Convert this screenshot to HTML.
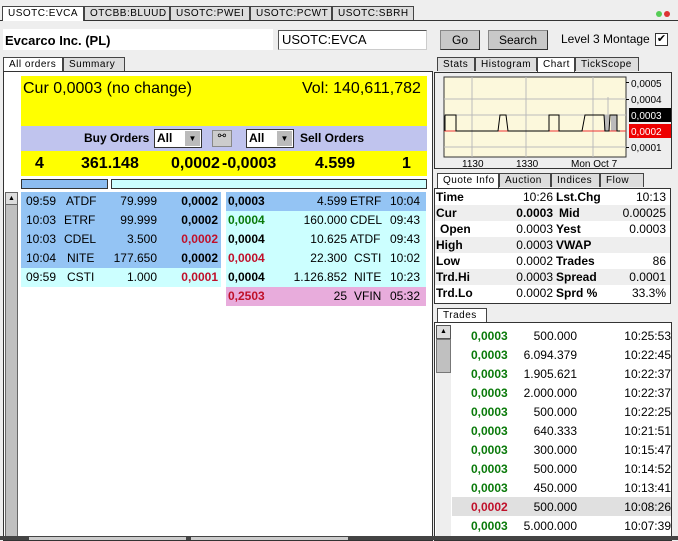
<!DOCTYPE html>
<html><head><style>
*{margin:0;padding:0;box-sizing:border-box}
body{width:678px;height:540px;background:#eeeeee;font-family:"Liberation Sans",sans-serif;position:relative;overflow:hidden;font-size:12px;color:#000}
.a{position:absolute}
.tab{position:absolute;height:14px;border:1px solid #444;border-bottom:none;background:#ddd;font-size:10px;letter-spacing:0.5px;padding:1px 0 0 5px;white-space:nowrap;overflow:hidden;border-top-right-radius:2px 0}
.tab.on{background:#fff}
.b{font-weight:bold}
.r{text-align:right}
.row{position:absolute;height:19px;font-size:12px;line-height:19px}
.row span{position:absolute}
.g{color:#0a7a0a}.red{color:#c0102a}
.btn{position:absolute;background:#c8c8c8;border:1px solid #888;border-right-color:#333;border-bottom-color:#333;text-align:center;font-size:12px;line-height:18px}
</style></head><body>
<div class="a" style="left:0;top:20px;width:678px;border-top:1px solid #333"></div>
<div class="tab on" style="left:2px;top:6px;width:82px;height:15px">USOTC:EVCA</div>
<div class="tab" style="left:84px;top:6px;width:86px">OTCBB:BLUUD</div>
<div class="tab" style="left:170px;top:6px;width:80px">USOTC:PWEI</div>
<div class="tab" style="left:250px;top:6px;width:82px">USOTC:PCWT</div>
<div class="tab" style="left:332px;top:6px;width:82px">USOTC:SBRH</div>
<div class="a" style="left:656px;top:11px;width:6px;height:6px;border-radius:50%;background:#5c5"></div>
<div class="a" style="left:664px;top:11px;width:6px;height:6px;border-radius:50%;background:#d33"></div>
<div class="a" style="left:3px;top:29px;width:270px;height:21px;background:#fff"></div>
<div class="a b" style="left:5px;top:33px;font-size:13px">Evcarco Inc. (PL)</div>
<div class="a" style="left:278px;top:30px;width:149px;height:20px;background:#fff;border:1px solid #555;border-right-color:#ccc;border-bottom-color:#ccc;font-size:13px;padding:1px 3px">USOTC:EVCA</div>
<div class="btn" style="left:440px;top:30px;width:40px;height:20px">Go</div>
<div class="btn" style="left:488px;top:30px;width:60px;height:20px">Search</div>
<div class="a" style="left:561px;top:32px;font-size:12px">Level 3 Montage</div>
<div class="a" style="left:655px;top:33px;width:13px;height:13px;border:1px solid #333;background:#fff;font-size:11px;line-height:11px;text-align:center">✔</div>
<div class="tab on" style="left:3px;top:57px;width:60px;height:15px">All orders</div>
<div class="tab" style="left:63px;top:57px;width:62px">Summary</div>
<div class="a" style="left:3px;top:71px;width:430px;height:470px;border:1px solid #333;background:#fff"></div>
<div class="a" style="left:21px;top:76px;width:406px;height:50px;background:#ffff00"></div>
<div class="a" style="left:23px;top:80px;font-size:16px">Cur 0,0003 (no change)</div>
<div class="a" style="left:302px;top:80px;font-size:16px">Vol: 140,611,782</div>
<div class="a" style="left:21px;top:126px;width:406px;height:25px;background:#c0c4ee"></div>
<div class="a b" style="left:84px;top:131px;font-size:12px">Buy Orders</div>
<div class="a" style="left:154px;top:129px;width:48px;height:19px;background:#fff;border:1px solid #333;font-size:12px;font-weight:bold;padding:1px 2px">All</div>
<div class="a" style="left:185px;top:131px;width:15px;height:15px;background:#bbb;font-size:8px;text-align:center;line-height:15px">▼</div>
<div class="a" style="left:212px;top:130px;width:20px;height:17px;background:#ccc;border:1px solid #888;font-size:10px;text-align:center">⚯</div>
<div class="a" style="left:246px;top:129px;width:48px;height:19px;background:#fff;border:1px solid #333;font-size:12px;font-weight:bold;padding:1px 2px">All</div>
<div class="a" style="left:277px;top:131px;width:15px;height:15px;background:#bbb;font-size:8px;text-align:center;line-height:15px">▼</div>
<div class="a b" style="left:300px;top:131px;font-size:12px">Sell Orders</div>
<div class="a" style="left:21px;top:151px;width:406px;height:25px;background:#ffff00"></div>
<div class="row b" style="left:21px;top:154px;width:406px;font-size:16px">
<span style="left:14px">4</span><span style="left:60px">361.148</span><span style="left:150px">0,0002</span><span style="left:201px">-0,0003</span><span style="left:294px">4.599</span><span style="left:381px">1</span></div>
<div class="a" style="left:21px;top:179px;width:87px;height:10px;background:#8cbcf0;border:1px solid #333"></div>
<div class="a" style="left:111px;top:179px;width:316px;height:10px;background:#ccffff;border:1px solid #333"></div>
<div class="a" style="left:5px;top:192px;width:13px;height:346px;background:#c0c0c0;border:1px solid #666"></div>
<div class="a" style="left:5px;top:192px;width:13px;height:13px;background:#ddd;border:1px solid #666;font-size:7px;text-align:center;line-height:11px">▲</div>
<div class="a" style="left:21px;top:192px;width:200px;height:76px;background:#94c4f4"></div>
<div class="a" style="left:21px;top:268px;width:200px;height:19px;background:#ccffff"></div>
<div class="a" style="left:226px;top:192px;width:200px;height:19px;background:#94c4f4"></div>
<div class="a" style="left:226px;top:211px;width:200px;height:76px;background:#ccffff"></div>
<div class="a" style="left:226px;top:287px;width:200px;height:19px;background:#e8acdc"></div>
<div class="row" style="left:21px;top:192px;width:200px"><span style="left:5px">09:59</span><span style="left:45px">ATDF</span><span class="r" style="right:64px">79.999</span><span class="b" style="right:3px">0,0002</span></div>
<div class="row" style="left:21px;top:211px;width:200px"><span style="left:5px">10:03</span><span style="left:43px">ETRF</span><span class="r" style="right:64px">99.999</span><span class="b" style="right:3px">0,0002</span></div>
<div class="row" style="left:21px;top:230px;width:200px"><span style="left:5px">10:03</span><span style="left:43px">CDEL</span><span class="r" style="right:64px">3.500</span><span class="b red" style="right:3px">0,0002</span></div>
<div class="row" style="left:21px;top:249px;width:200px"><span style="left:5px">10:04</span><span style="left:46px">NITE</span><span class="r" style="right:64px">177.650</span><span class="b" style="right:3px">0,0002</span></div>
<div class="row" style="left:21px;top:268px;width:200px"><span style="left:5px">09:59</span><span style="left:46px">CSTI</span><span class="r" style="right:64px">1.000</span><span class="b red" style="right:3px">0,0001</span></div>
<div class="row" style="left:226px;top:192px;width:200px"><span class="b" style="left:2px">0,0003</span><span style="right:79px">4.599</span><span style="left:124px">ETRF</span><span style="left:164px">10:04</span></div>
<div class="row" style="left:226px;top:211px;width:200px"><span class="b g" style="left:2px">0,0004</span><span style="right:79px">160.000</span><span style="left:124px">CDEL</span><span style="left:164px">09:43</span></div>
<div class="row" style="left:226px;top:230px;width:200px"><span class="b" style="left:2px">0,0004</span><span style="right:79px">10.625</span><span style="left:124px">ATDF</span><span style="left:164px">09:43</span></div>
<div class="row" style="left:226px;top:249px;width:200px"><span class="b red" style="left:2px">0,0004</span><span style="right:79px">22.300</span><span style="left:128px">CSTI</span><span style="left:164px">10:02</span></div>
<div class="row" style="left:226px;top:268px;width:200px"><span class="b" style="left:2px">0,0004</span><span style="right:79px">1.126.852</span><span style="left:128px">NITE</span><span style="left:164px">10:23</span></div>
<div class="row" style="left:226px;top:287px;width:200px"><span class="b red" style="left:2px">0,2503</span><span style="right:79px">25</span><span style="left:128px">VFIN</span><span style="left:164px">05:32</span></div>
<div class="tab" style="left:437px;top:57px;width:38px">Stats</div>
<div class="tab" style="left:475px;top:57px;width:62px">Histogram</div>
<div class="tab on" style="left:537px;top:57px;width:38px;height:15px">Chart</div>
<div class="tab" style="left:575px;top:57px;width:64px">TickScope</div>
<div class="a" style="left:434px;top:72px;width:238px;height:97px;border:1px solid #333;background:#eee"></div>
<svg class="a" style="left:434px;top:72px" width="238" height="97">
<rect x="10" y="5" width="182" height="80" fill="#fcf8dc" stroke="#333"/>
<g stroke="#bbb"><line x1="38" y1="5" x2="38" y2="85"/><line x1="92" y1="5" x2="92" y2="85"/><line x1="159" y1="5" x2="159" y2="85"/>
<line x1="10" y1="27" x2="192" y2="27"/><line x1="10" y1="43" x2="192" y2="43"/><line x1="10" y1="59" x2="192" y2="59"/><line x1="10" y1="75" x2="192" y2="75"/></g>
<rect x="170" y="43" width="5" height="16" fill="#bbb"/><rect x="177" y="43" width="6" height="16" fill="#bbb"/><line x1="174" y1="25" x2="174" y2="43" stroke="#bbb"/>
<line x1="10" y1="59" x2="192" y2="59" stroke="#e33"/>
<polyline fill="none" stroke="#000" points="11,59 11,43 22,43 22,59 64,59 66,43 72,43 74,59 115,59 115,43 125,43 125,59 148,59 151,43 170,43 171,59 175,59 176,43 183,43 183,59 186,59"/>
<g fill="#000"><rect x="192" y="10" width="3" height="1"/><rect x="192" y="27" width="3" height="1"/><rect x="192" y="75" width="3" height="1"/></g>
<rect x="195" y="36" width="42" height="14" fill="#000"/><rect x="195" y="52" width="42" height="14" fill="#e00"/>
<g font-family="Liberation Sans" font-size="10"><text x="197" y="15">0,0005</text><text x="197" y="31">0,0004</text><text x="197" y="47" fill="#fff">0,0003</text><text x="197" y="63" fill="#fff">0,0002</text><text x="197" y="79">0,0001</text>
<text x="28" y="95">1130</text><text x="82" y="95">1330</text><text x="137" y="95">Mon  Oct 7</text></g>
</svg>
<div class="tab on" style="left:437px;top:173px;width:62px;height:15px">Quote Info</div>
<div class="tab" style="left:499px;top:173px;width:52px">Auction</div>
<div class="tab" style="left:551px;top:173px;width:49px">Indices</div>
<div class="tab" style="left:600px;top:173px;width:44px">Flow</div>
<div class="a" style="left:434px;top:188px;width:237px;height:116px;border:1px solid #333;background:#fff"></div>
<div class="a" style="left:435px;top:205px;width:235px;height:16px;background:#eee"></div>
<div class="a" style="left:435px;top:237px;width:235px;height:16px;background:#eee"></div>
<div class="a" style="left:435px;top:269px;width:235px;height:16px;background:#eee"></div>
<div class="row" style="left:436px;top:189px;width:233px;height:16px;line-height:16px"><span class="b" style="left:0">Time</span><span style="right:116px">10:26</span><span class="b" style="left:120px">Lst.Chg</span><span style="right:3px">10:13</span></div>
<div class="row" style="left:436px;top:205px;width:233px;height:16px;line-height:16px"><span class="b" style="left:0">Cur</span><span class="b" style="right:116px">0.0003</span><span class="b" style="left:123px">Mid</span><span style="right:3px">0.00025</span></div>
<div class="row" style="left:436px;top:221px;width:233px;height:16px;line-height:16px"><span class="b" style="left:4px">Open</span><span style="right:116px">0.0003</span><span class="b" style="left:120px">Yest</span><span style="right:3px">0.0003</span></div>
<div class="row" style="left:436px;top:237px;width:233px;height:16px;line-height:16px"><span class="b" style="left:0">High</span><span style="right:116px">0.0003</span><span class="b" style="left:120px">VWAP</span></div>
<div class="row" style="left:436px;top:253px;width:233px;height:16px;line-height:16px"><span class="b" style="left:0">Low</span><span style="right:116px">0.0002</span><span class="b" style="left:120px">Trades</span><span style="right:3px">86</span></div>
<div class="row" style="left:436px;top:269px;width:233px;height:16px;line-height:16px"><span class="b" style="left:0">Trd.Hi</span><span style="right:116px">0.0003</span><span class="b" style="left:120px">Spread</span><span style="right:3px">0.0001</span></div>
<div class="row" style="left:436px;top:285px;width:233px;height:16px;line-height:16px"><span class="b" style="left:0">Trd.Lo</span><span style="right:116px">0.0002</span><span class="b" style="left:120px">Sprd %</span><span style="right:3px">33.3%</span></div>
<div class="tab on" style="left:437px;top:308px;width:50px;height:15px">Trades</div>
<div class="a" style="left:434px;top:322px;width:238px;height:219px;border:1px solid #333;background:#fff"></div>
<div class="a" style="left:436px;top:325px;width:15px;height:215px;background:#eee"></div>
<div class="a" style="left:436px;top:325px;width:15px;height:14px;background:#ddd;border:1px solid #555;font-size:7px;text-align:center;line-height:12px">▲</div>
<div class="a" style="left:436px;top:339px;width:15px;height:34px;background:#c0c0c0;border:1px solid #777"></div>
<div class="a" style="left:452px;top:497px;width:219px;height:19px;background:#e0e0e0"></div>
<div class="row" style="left:452px;top:327px;width:219px"><span class="b g" style="left:19px">0,0003</span><span style="right:94px">500.000</span><span style="right:0">10:25:53</span></div>
<div class="row" style="left:452px;top:346px;width:219px"><span class="b g" style="left:19px">0,0003</span><span style="right:94px">6.094.379</span><span style="right:0">10:22:45</span></div>
<div class="row" style="left:452px;top:365px;width:219px"><span class="b g" style="left:19px">0,0003</span><span style="right:94px">1.905.621</span><span style="right:0">10:22:37</span></div>
<div class="row" style="left:452px;top:384px;width:219px"><span class="b g" style="left:19px">0,0003</span><span style="right:94px">2.000.000</span><span style="right:0">10:22:37</span></div>
<div class="row" style="left:452px;top:403px;width:219px"><span class="b g" style="left:19px">0,0003</span><span style="right:94px">500.000</span><span style="right:0">10:22:25</span></div>
<div class="row" style="left:452px;top:422px;width:219px"><span class="b g" style="left:19px">0,0003</span><span style="right:94px">640.333</span><span style="right:0">10:21:51</span></div>
<div class="row" style="left:452px;top:441px;width:219px"><span class="b g" style="left:19px">0,0003</span><span style="right:94px">300.000</span><span style="right:0">10:15:47</span></div>
<div class="row" style="left:452px;top:460px;width:219px"><span class="b g" style="left:19px">0,0003</span><span style="right:94px">500.000</span><span style="right:0">10:14:52</span></div>
<div class="row" style="left:452px;top:479px;width:219px"><span class="b g" style="left:19px">0,0003</span><span style="right:94px">450.000</span><span style="right:0">10:13:41</span></div>
<div class="row" style="left:452px;top:498px;width:219px"><span class="b red" style="left:19px">0,0002</span><span style="right:94px">500.000</span><span style="right:0">10:08:26</span></div>
<div class="row" style="left:452px;top:517px;width:219px"><span class="b g" style="left:19px">0,0003</span><span style="right:94px">5.000.000</span><span style="right:0">10:07:39</span></div>
<div class="a" style="left:0;top:536px;width:678px;height:4px;background:#444"></div>
<div class="a" style="left:29px;top:537px;width:157px;height:3px;background:#ccc"></div>
<div class="a" style="left:191px;top:537px;width:157px;height:3px;background:#ccc"></div>
</body></html>
